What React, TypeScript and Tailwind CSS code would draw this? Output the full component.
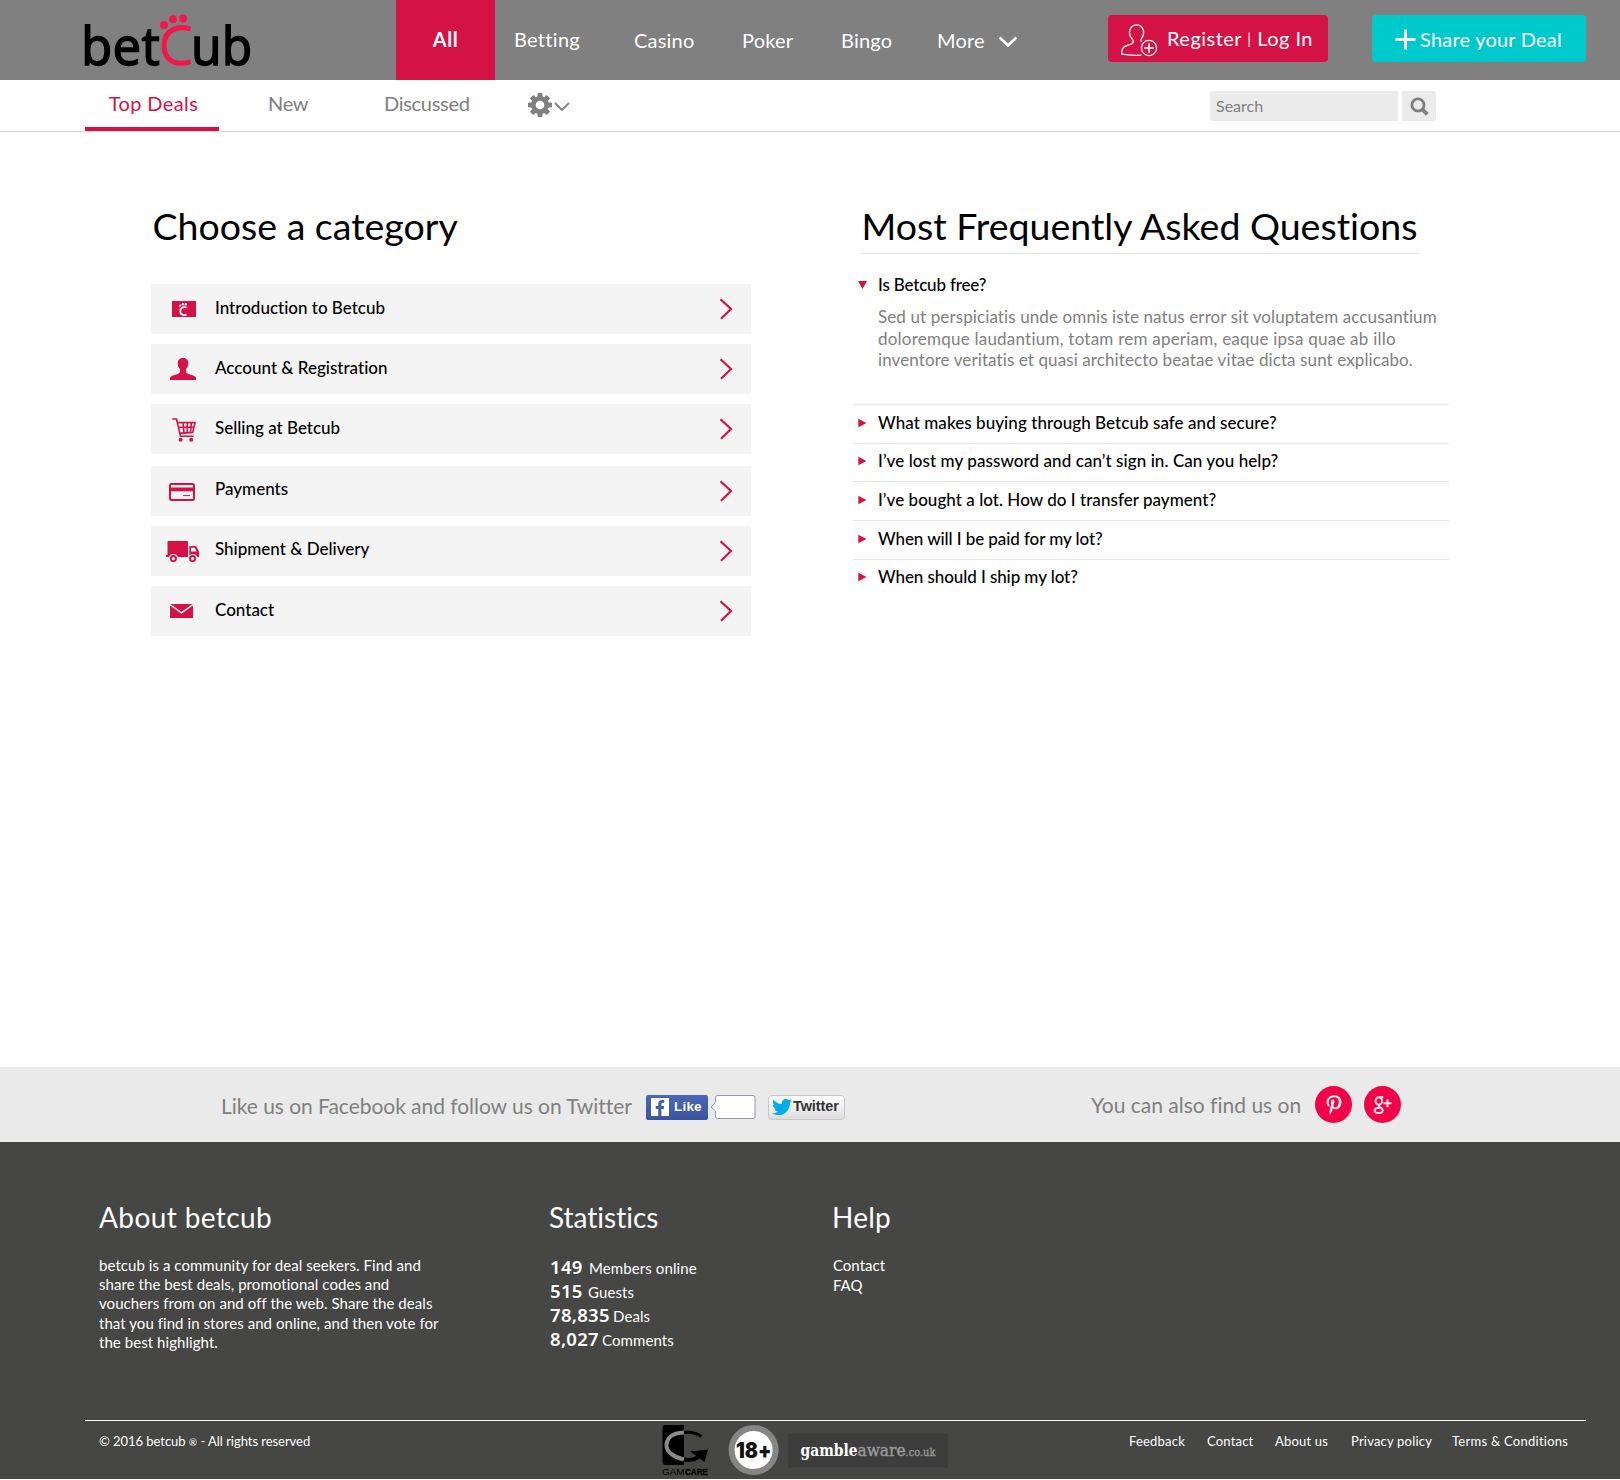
import React from 'react';
import { FaFacebookF, FaPinterestP, FaTwitter } from 'react-icons/fa';

const CRIMSON = '#d41245';

function Logo() {
  return (
    <svg width="168" height="80" viewBox="0 0 168 80" className="shrink-0 overflow-visible" aria-label="betCub">
      <g fontFamily="'Noto Sans', sans-serif" fontSize="53" fill="#000" stroke="#000" strokeWidth="1.300">
        <text x="-4" y="64.500" textLength="79" lengthAdjust="spacingAndGlyphs">bet</text>
        <text x="106" y="64.500" textLength="61.500" lengthAdjust="spacingAndGlyphs">ub</text>
      </g>
      <path d="M105.5 28.8C94 25.6 79 29 79 45.5S93 66 105.5 61.6" fill="none" stroke="#f4164b" strokeWidth="5" />
      <g fill="#f4164b">
        <circle cx="79" cy="25" r="4" />
        <circle cx="88" cy="19.3" r="4" />
        <circle cx="98" cy="18.6" r="4" />
      </g>
    </svg>
  );
}

function Gear() {
  return (
    <svg width="24" height="24" viewBox="-12 -12 24 24" fill="#808080">
      {[0, 45, 90, 135].map((a) => (
        <path key={a} transform={`rotate(${a})`} d="M-2.3 -12H2.3L2.9 -5.5H-2.9ZM-2.3 12H2.3L2.9 5.5H-2.9Z" />
      ))}
      <circle r="6.7" fill="none" stroke="#808080" strokeWidth="4.8" />
    </svg>
  );
}

function UserPlus() {
  return (
    <svg width="37" height="33" viewBox="0 0 37 33" fill="none" stroke="#fff" strokeWidth="1.3" className="mt-[3px]">
      <path d="M20.500 31.200C13 31.500 6 31.200 0.700 30.200C0.500 26 1.200 23.600 4 22.400C7 21 10.500 20.500 12 18.600C12.600 17.400 11.800 15.800 10.800 14.500C8.300 11.500 8 7.500 9.500 4.500C11 1.800 13.300 0.800 15.500 0.800C18.200 0.800 20.700 2.200 21.900 5C23.300 8.500 22.600 11.500 20.700 14.200C20 15.500 19.700 16.600 20.300 17.800" />
      <circle cx="28" cy="24" r="7.600" />
      <path d="M28 19.200v9.600M23.200 24h9.600" strokeWidth="1.600" />
    </svg>
  );
}

const rowIcons = {
  intro: (
    <>
      <path fill={CRIMSON} d="M6 17h24v16H6z" />
      <path d="M20.500 23.400C17 22.500 14.200 24 14.200 27.200S17 31.800 20.600 30.700" fill="none" stroke="#fff" strokeWidth="1.800" />
      <g fill="#fff">
        <circle cx="14.200" cy="21.700" r="1.100" />
        <circle cx="16.900" cy="20.300" r="1.200" />
        <circle cx="19.800" cy="20.300" r="1.200" />
      </g>
    </>
  ),
  user: (
    <path
      fill={CRIMSON}
      d="M17 14c3.300 0 5.300 2 5.300 5.300 0 2.600-1 4.500-2.300 6v2.400c0 1.300 1.500 1.900 4 2.800 3.500 1.200 6 1.800 6 3.500v2H4v-2c0-1.700 2.500-2.300 6-3.500 2.500-.9 4-1.500 4-2.800v-2.400c-1.300-1.500-2.300-3.400-2.300-6C11.700 16 13.700 14 17 14z"
    />
  ),
  cart: (
    <>
      <path
        d="M6.300 15h4.200l4 17.300h13M11.200 18.600H29l-2.300 9.800-13.200 1M12.300 23.200h15.500M17 18.600l1 10.500M21.300 18.600v10.200M25.400 18.600l-1 10.200"
        fill="none"
        stroke={CRIMSON}
        strokeWidth="1.600"
      />
      <circle cx="14.600" cy="35.800" r="2" fill={CRIMSON} />
      <circle cx="25.200" cy="35.800" r="2" fill={CRIMSON} />
    </>
  ),
  card: (
    <>
      <rect x="4" y="18" width="24" height="16" rx="1.800" fill="none" stroke={CRIMSON} strokeWidth="2" />
      <path fill={CRIMSON} d="M4 21.500h24v3.800H4z" />
      <path d="M17 29.600h7" stroke={CRIMSON} />
    </>
  ),
  truck: (
    <>
      <path fill={CRIMSON} d="M2.500 15H21a1 1 0 0 1 1 1v15H12a5 5 0 0 0-9.200 0H0v-2h1.500V16a1 1 0 0 1 1-1z" />
      <path
        fill={CRIMSON}
        fillRule="evenodd"
        d="M23.300 20h5.500c.8 0 1.400.4 1.900 1.100l1.700 3.200c.4.700.6 1.300.6 2V31h-1.500a5 5 0 0 0-8.200-1.500zM25 21.700v3.800h5.700l-1.700-3.300c-.2-.4-.4-.5-.8-.5z"
      />
      <circle cx="7.400" cy="32.600" r="2.600" fill="none" stroke={CRIMSON} strokeWidth="1.900" />
      <circle cx="26.600" cy="32.600" r="2.600" fill="none" stroke={CRIMSON} strokeWidth="1.900" />
    </>
  ),
  mail: (
    <>
      <path fill={CRIMSON} d="M4 18h23v14H4z" />
      <path d="M4 18.600l11.500 8.200L27 18.600" fill="none" stroke="#f4f4f4" strokeWidth="1.500" />
    </>
  ),
};

const categories: { icon: keyof typeof rowIcons; label: string; gap: string; lift: string }[] = [
  { icon: 'intro', label: 'Introduction to Betcub', gap: 'mt-[34px]', lift: 'pb-[3px]' },
  { icon: 'user', label: 'Account & Registration', gap: 'mt-2.5', lift: 'pb-[3px]' },
  { icon: 'cart', label: 'Selling at Betcub', gap: 'mt-2.5', lift: 'pb-[3px]' },
  { icon: 'card', label: 'Payments', gap: 'mt-3', lift: 'pb-[5px]' },
  { icon: 'truck', label: 'Shipment & Delivery', gap: 'mt-2.5', lift: 'pb-[5px]' },
  { icon: 'mail', label: 'Contact', gap: 'mt-2.5', lift: 'pb-[3px]' },
];

const questions = [
  { text: 'What makes buying through Betcub safe and secure?', size: 'h-[39px] pt-1.5 tracking-[0.06px]' },
  { text: 'I’ve lost my password and can’t sign in. Can you help?', size: 'h-[38px] pt-[5px] tracking-[0.07px]' },
  { text: 'I’ve bought a lot. How do I transfer payment?', size: 'h-[39px] pt-1.5 tracking-[0.04px]' },
  { text: 'When will I be paid for my lot?', size: 'h-[39px] pt-1.5 tracking-[-0.08px]' },
  { text: 'When should I ship my lot?', size: 'h-[38px] pt-[5px] tracking-[-0.08px]' },
];

const stats = [
  { n: '149', label: 'Members online', w: 'w-[39px]' },
  { n: '515', label: 'Guests', w: 'w-[38px]' },
  { n: '78,835', label: 'Deals', w: 'w-[63px]' },
  { n: '8,027', label: 'Comments', w: 'w-[52px]' },
];

function Header() {
  return (
    <header className="flex h-20 items-center bg-[#808080] pl-[85px] text-[20px] tracking-[0.2px] whitespace-nowrap text-white">
      <Logo />
      <nav className="ml-[143px] flex items-center">
        <a className="flex h-20 w-[99px] items-center justify-center bg-[#d41245] pb-0.5 font-bold tracking-[0.6px]">All</a>
        <a className="ml-[19px] w-[120px] pb-0.5 tracking-[0.3px]">Betting</a>
        <a className="w-[108px]">Casino</a>
        <a className="w-[99px]">Poker</a>
        <a className="w-[96px]">Bingo</a>
        <a className="flex w-[81px] items-center justify-between">
          More
          <svg width="20" height="12" viewBox="0 0 20 12" className="mt-1">
            <path d="M1.500 1.500l8.500 8 8.500-8" fill="none" stroke="#fff" strokeWidth="2.600" />
          </svg>
        </a>
      </nav>
      <a className="-mt-[3px] ml-[90px] flex h-[47px] w-[220px] items-center rounded bg-[#d41245] pl-[13px] tracking-[0.48px]">
        <UserPlus />
        <span className="ml-[9px] pb-0.5">
          Register <span className="align-[2px] text-[15px]">|</span> Log In
        </span>
      </a>
      <a className="-mt-[3px] ml-11 flex h-[47px] w-[214px] items-center rounded bg-[#00c9cb] pl-[23px] tracking-[0.22px]">
        <svg width="21" height="21" viewBox="0 0 21 21" className="mt-px">
          <path d="M10.500 0.500v20M0.500 10.500h20" stroke="#fff" strokeWidth="3" />
        </svg>
        <span className="ml-1 pt-px">Share your Deal</span>
      </a>
    </header>
  );
}

function SubNav() {
  return (
    <div className="flex h-[52px] border-b border-[#d8d8d8] pl-[85px] text-[20px] leading-[46px] whitespace-nowrap text-[#808080]">
      <a className="flex h-[51px] w-[134px] justify-center border-b-4 border-[#d41245] pl-[3px] tracking-[0.4px] text-[#d41245]">Top Deals</a>
      <a className="ml-[49px] w-[116px] tracking-[-0.3px]">New</a>
      <a className="w-[144px] tracking-[-0.3px]">Discussed</a>
      <div className="mt-[13px] flex w-[42px] items-start justify-between">
        <Gear />
        <svg width="16" height="10" viewBox="0 0 16 10" className="mt-[9px]">
          <path d="M1 1l7 7 7-7" fill="none" stroke="#808080" strokeWidth="1.800" />
        </svg>
      </div>
      <div className="mt-[11px] ml-[640px] flex h-[30px] gap-1">
        <div className="w-[188px] rounded-l-[3px] bg-[#ebebeb] pl-1.5 text-[16px] leading-[29px]">Search</div>
        <div className="flex w-[34px] items-center justify-center rounded-r-[3px] bg-[#ebebeb]">
          <svg width="19" height="19" viewBox="0 0 19 19" fill="none" stroke="#808080">
            <circle cx="8" cy="8" r="6.100" strokeWidth="2.900" />
            <path d="M12.300 12.300l5 5" strokeWidth="3.800" />
          </svg>
        </div>
      </div>
    </div>
  );
}

function Categories() {
  return (
    <section className="w-[600px]">
      <h1 className="pl-[1.500px] text-[37.500px] leading-[48px]">Choose a category</h1>
      {categories.map((c) => (
        <a key={c.label} className={`flex h-[50px] items-center bg-[#f4f4f4] pl-[15px] ${c.gap}`}>
          <svg width="36" height="50" viewBox="0 0 36 50">{rowIcons[c.icon]}</svg>
          <span className={`ml-[13px] text-[17px] font-medium ${c.lift}`}>{c.label}</span>
          <svg width="14" height="22" viewBox="0 0 14 22" className="mr-[18px] ml-auto">
            <path d="M1.500 1.200L12 11 2 20.800" fill="none" stroke={CRIMSON} strokeWidth="2.200" />
          </svg>
        </a>
      ))}
    </section>
  );
}

function Faq() {
  return (
    <section className="ml-[102px] w-[596px] whitespace-nowrap">
      <h2 className="ml-[7px] h-[52px] w-[560px] border-b border-[#e6e6e6] pl-[1.500px] text-[37.500px] leading-[48px]">
        Most Frequently Asked Questions
      </h2>
      <div className="mt-[19px] flex items-center pl-[5px] text-[17px] leading-6 font-medium tracking-[-0.18px]">
        <svg width="9" height="8" viewBox="0 0 9 8">
          <path d="M0 0h9L4.500 8z" fill={CRIMSON} />
        </svg>
        <span className="ml-[11px]">Is Betcub free?</span>
      </div>
      <p className="mt-[9px] mb-[33.500px] pl-[25px] text-[17px] leading-[21.500px] text-[#808080]">
        <span className="block tracking-[0.11px]">Sed ut perspiciatis unde omnis iste natus error sit voluptatem accusantium</span>
        <span className="block tracking-[0.23px]">doloremque laudantium, totam rem aperiam, eaque ipsa quae ab illo</span>
        <span className="block tracking-[0.1px]">inventore veritatis et quasi architecto beatae vitae dicta sunt explicabo.</span>
      </p>
      {questions.map((q) => (
        <div key={q.text} className={`flex items-start border-t border-[#e6e6e6] pl-[5px] text-[17px] leading-6 font-medium ${q.size}`}>
          <svg width="9" height="24" viewBox="0 0 9 24">
            <path d="M0.300 7.700v8.600L8.500 12z" fill={CRIMSON} />
          </svg>
          <span className="ml-[11px]">{q.text}</span>
        </div>
      ))}
    </section>
  );
}

function SocialBar() {
  return (
    <div className="flex h-[75px] items-center bg-[#eaeaea] pl-[221px] text-[21px] whitespace-nowrap text-[#808080]">
      <span className="mt-[2px] w-[425px] tracking-[-0.04px]">Like us on Facebook and follow us on Twitter</span>
      <div className="mt-[5px] flex h-[25px] w-[62px] items-center rounded-[2px] bg-linear-to-b from-[#4b67b8] to-[#3b549c] pl-[5px]">
        <span className="flex size-[18px] items-end justify-end bg-white pr-px">
          <FaFacebookF size={16} color="#4460a8" />
        </span>
        <span className="ml-[5px] font-['Liberation_Sans'] text-[13.500px] font-bold tracking-[0.2px] text-white">Like</span>
      </div>
      <svg width="46" height="25" viewBox="0 0 46 25" className="mt-[5px] ml-[2px]">
        <path d="M7.500 0.500h35.500a2 2 0 0 1 2 2v19a2 2 0 0 1-2 2H7.500a2 2 0 0 1-2-2V16L1 12l4.500-4.500v-5a2 2 0 0 1 2-2z" fill="#fff" stroke="#9197a5" />
      </svg>
      <div className="mt-[5px] ml-3 flex h-[25px] w-[77px] items-center rounded-[4px] border border-[#c8c8c8] bg-linear-to-b from-white to-[#dedede] pl-[3px]">
        <FaTwitter size={20} color="#00aced" />
        <span className="ml-px font-['Liberation_Sans'] text-[14.500px] font-bold tracking-[-0.1px] text-[#333]">Twitter</span>
      </div>
      <span className="ml-[246px] w-[224px]">You can also find us on</span>
      <span className="flex size-[37px] items-center justify-center rounded-full bg-[#f20349]">
        <FaPinterestP size={20} color="#efe9ea" />
      </span>
      <span className="ml-3 flex size-[37px] items-center justify-center rounded-full bg-[#f20349]">
        <svg width="20" height="20" viewBox="0 0 20 20" fill="none" stroke="#efe9ea" strokeWidth="1.900">
          <ellipse cx="5.800" cy="6" rx="3.300" ry="3.700" />
          <path d="M5.500 2.200h4.800M7.300 9.500C5 10.300 5.300 11.600 7 12.400c2 .9 2.900 1.800 2.700 3.200-.2 1.700-1.900 2.500-4.200 2.500-2.500 0-3.900-1-3.900-2.500 0-1.600 1.700-2.800 5-2.900" />
          <path d="M10.500 8.200h8M14.500 4.200v8" strokeWidth="2" />
        </svg>
      </span>
    </div>
  );
}

function Badges() {
  return (
    <svg width="290" height="57" viewBox="0 0 290 57" className="shrink-0 overflow-visible">
      <path d="M3.500 4H22v40H3.500a3 3 0 0 1-3-3V7a3 3 0 0 1 3-3z" fill="#000" />
      <g fill="none">
        <path d="M22 11.500C9 12 4.500 18 4.500 24.500S12 36.500 22 38.500" stroke="#8b8b8b" strokeWidth="4" />
        <path d="M22 11.500C30 10.500 36 13 39.500 15.500" stroke="#000" strokeWidth="3" />
        <path d="M22 38.500C30 40 38 37 41.500 31" stroke="#000" strokeWidth="4" />
      </g>
      <path d="M28 30.500L46 28.500 42.500 41z" fill="#000" />
      <g fontFamily="'Liberation Sans', sans-serif" fontSize="9" fill="#000">
        <text x="0" y="53.500" textLength="22.500" lengthAdjust="spacingAndGlyphs">GAM</text>
        <text x="23" y="53.500" textLength="23" lengthAdjust="spacingAndGlyphs" fontWeight="700" stroke="#000" strokeWidth="0.300">CARE</text>
      </g>
      <circle cx="91.600" cy="29" r="22" fill="#fff" stroke="#868686" strokeWidth="6" />
      <text x="74" y="37" textLength="35.500" lengthAdjust="spacingAndGlyphs" fontFamily="Inter, sans-serif" fontWeight="900" fontSize="22" fill="#111">18+</text>
      <path d="M126 12.500h160v34H126z" fill="#3d3d3d" />
      <g fontFamily="'DejaVu Serif', serif" fontSize="16">
        <text x="138.500" y="34.500" textLength="57" lengthAdjust="spacingAndGlyphs" fontWeight="700" fill="#fff">gamble</text>
        <text x="195.500" y="34.500" textLength="48" lengthAdjust="spacingAndGlyphs" fill="#9a9a9a" stroke="#9a9a9a" strokeWidth="0.400">aware</text>
        <text x="243.500" y="34.500" textLength="30" lengthAdjust="spacingAndGlyphs" fontSize="10.500" fill="#9a9a9a" stroke="#9a9a9a" strokeWidth="0.300">.co.uk</text>
      </g>
    </svg>
  );
}

function Footer() {
  return (
    <footer className="h-[337px] bg-[#464644] text-white">
      <div className="flex h-[278px] pt-[57px] pl-[99px] whitespace-nowrap">
        <section className="w-[451px]">
          <h3 className="text-[28px] leading-9 tracking-[0.4px]">About betcub</h3>
          <p className="mt-[21px] text-[15px] leading-[19.200px] tracking-[0.06px]">
            betcub is a community for deal seekers. Find and
            <br />
            share the best deals, promotional codes and
            <br />
            vouchers from on and off the web. Share the deals
            <br />
            that you find in stores and online, and then vote for
            <br />
            the best highlight.
          </p>
        </section>
        <section className="w-[283px]">
          <h3 className="-ml-px text-[28px] leading-9">Statistics</h3>
          <ul className="mt-5">
            {stats.map((s) => (
              <li key={s.label} className="flex h-6 items-baseline leading-6">
                <span className={`font-['Noto_Sans'] text-[18.500px] font-semibold tracking-[0.3px] ${s.w}`}>{s.n}</span>
                <span className="text-[15px] tracking-[0.1px]">{s.label}</span>
              </li>
            ))}
          </ul>
        </section>
        <section>
          <h3 className="-ml-px text-[28px] leading-9 tracking-[0.2px]">Help</h3>
          <ul className="mt-[21px] text-[15px] leading-[19.500px]">
            <li>Contact</li>
            <li>FAQ</li>
          </ul>
        </section>
      </div>
      <div className="mr-[34px] ml-[85px] flex border-t border-white text-[13px] leading-5 whitespace-nowrap">
        <span className="mt-2.5 ml-3.5 w-[563px] tracking-[-0.04px]">
          © 2016 betcub <span className="text-[10px] leading-none">®</span> - All rights reserved
        </span>
        <Badges />
        <nav className="mt-2.5 ml-[177px] flex tracking-[0.2px]">
          <a className="w-[78px]">Feedback</a>
          <a className="w-[68px]">Contact</a>
          <a className="w-[76px]">About us</a>
          <a className="w-[101px]">Privacy policy</a>
          <a className="tracking-[0.26px]">Terms &amp; Conditions</a>
        </nav>
      </div>
    </footer>
  );
}

export default function App() {
  return (
    <div className="h-[1480px] w-[1620px] overflow-hidden bg-white font-['Lato',sans-serif] text-black [font-variant-ligatures:none]">
      <Header />
      <SubNav />
      <main className="flex h-[935px] pt-[70px] pl-[151px]">
        <Categories />
        <Faq />
      </main>
      <SocialBar />
      <Footer />
    </div>
  );
}
